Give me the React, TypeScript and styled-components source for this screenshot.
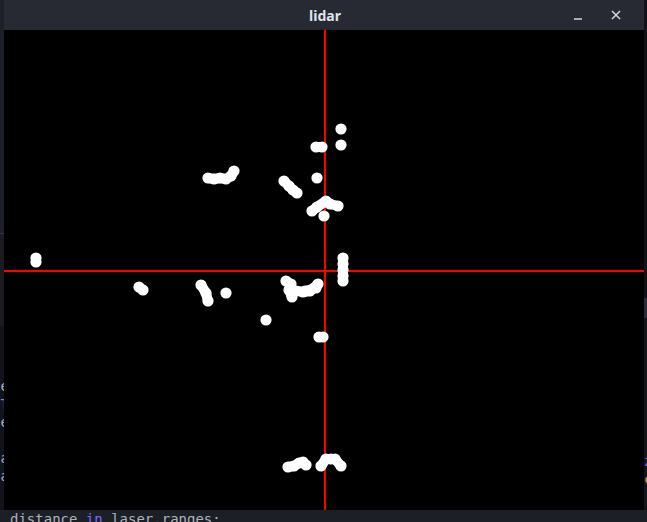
import React from "react";
import styled, { createGlobalStyle } from "styled-components";

const Global = createGlobalStyle`
  html, body { margin: 0; padding: 0; background: #15161b; overflow: hidden; }
  #root { width: 647px; height: 522px; }
`;

const Page = styled.div`
  width: 647px;
  height: 522px;
  display: flex;
  flex-direction: column;
  overflow: hidden;
  background: #15161b;
`;

const Middle = styled.div`
  display: flex;
  height: 510px;
`;

const Strip = styled.div<{ $w: number }>`
  width: ${(p) => p.$w}px;
  flex: none;
  display: flex;
  flex-direction: column;
  overflow: hidden;
`;

const StripBlock = styled.div<{ $h: number; $bg: string; $border?: string }>`
  height: ${(p) => p.$h}px;
  flex: none;
  width: 100%;
  background: ${(p) => p.$bg};
  border-bottom: ${(p) => (p.$border ? `1px solid ${p.$border}` : "none")};
`;

const StripText = styled.div<{ $align: "left" | "right"; $pad: number }>`
  flex: 1;
  width: 100%;
  display: flex;
  flex-direction: column;
  align-items: ${(p) => (p.$align === "right" ? "flex-start" : "flex-end")};
  padding-top: ${(p) => p.$pad}px;
  font-family: "DejaVu Sans Mono", monospace;
  font-size: 14px;
  line-height: 18px;
  color: #aab2bf;
  background: #13141a;
`;

const Glyph = styled.span<{ $c?: string; $dx: number }>`
  display: block;
  height: 18px;
  color: ${(p) => p.$c || "#aab2bf"};
  margin-right: ${(p) => p.$dx}px;
  white-space: pre;
`;

const Window = styled.div`
  width: 640px;
  flex: none;
  display: flex;
  flex-direction: column;
`;

const TitleBar = styled.div`
  height: 30px;
  background: #282a33;
  display: grid;
  grid-template-columns: 1fr auto 1fr;
  align-items: center;
`;

const Title = styled.div`
  font-family: "Noto Sans", "DejaVu Sans", sans-serif;
  font-weight: 700;
  font-size: 14px;
  color: #dfe3ea;
  grid-column: 2;
  transform: translateX(1px);
`;

const Controls = styled.div`
  grid-column: 3;
  justify-self: end;
  display: flex;
  align-items: center;
  gap: 22px;
  padding-right: 20px;
`;

const CtlBtn = styled.div`
  width: 16px;
  height: 16px;
  display: flex;
  align-items: center;
  justify-content: center;
`;

const Canvas = styled.div`
  height: 480px;
  background: #000;
`;

const EditorLine = styled.div`
  height: 12px;
  background: #1d1f26;
  display: flex;
  align-items: flex-start;
  padding-left: 10px;
  font-family: "DejaVu Sans Mono", monospace;
  font-size: 14px;
  line-height: 18px;
  color: #aab2bf;
  overflow: hidden;
  white-space: pre;
`;

const Kw = styled.span`
  color: #7a6af2;
`;

type Pt = [number, number];
const OX = 4;
const OY = 30;

const singles: Pt[] = [
  [341, 129], [341, 145], [317, 178], [226, 293], [266, 320], [324, 216],
];

const groups: Pt[][] = [
  [[316, 147], [322, 147]],
  [[208, 178], [214, 179], [220, 178], [226, 179], [231, 176], [234, 171]],
  [[284, 181], [289, 186], [293, 190], [297, 193]],
  [[312, 211], [317, 207], [326, 201], [330, 204], [338, 206]],
  [[36, 258], [36, 262]],
  [[343, 258], [343, 264], [343, 270], [343, 276], [343, 281]],
  [[139, 287], [143, 290]],
  [[201, 285], [206, 293], [208, 301]],
  [[319, 337], [323, 337]],
  [[286, 281], [291, 284], [289, 290], [292, 297]],
  [[292, 290], [303, 292], [310, 291], [318, 284]],
  [[305, 291], [316, 288]],
  [[288, 467], [294, 466], [299, 463], [303, 462], [306, 465]],
  [[321, 466], [326, 459], [331, 459], [335, 459], [341, 466]],
];

const Lidar: React.FC = () => (
  <svg width="640" height="480" viewBox="0 0 640 480" style={{ display: "block" }}>
    <line x1={0} y1={241} x2={640} y2={241} stroke="#ff0000" strokeWidth={2} />
    <line x1={321} y1={0} x2={321} y2={480} stroke="#ff0000" strokeWidth={2} />
    {groups.map((g, i) => (
      <g key={i}>
        <polyline
          points={g.map(([x, y]) => `${x - OX},${y - OY}`).join(" ")}
          fill="none"
          stroke="#fff"
          strokeWidth={10}
          strokeLinecap="round"
          strokeLinejoin="round"
        />
        {g.map(([x, y], j) => (
          <circle key={j} cx={x - OX} cy={y - OY} r={5.6} fill="#fff" />
        ))}
      </g>
    ))}
    {singles.map(([x, y], i) => (
      <circle key={i} cx={x - OX} cy={y - OY} r={5.6} fill="#fff" />
    ))}
  </svg>
);

export default function App() {
  return (
    <Page>
      <Global />
      <Middle>
        <Strip $w={4}>
          <StripBlock $h={233} $bg="#1e2027" $border="#33363f" />
          <StripBlock $h={92} $bg="#1b1c22" />
          <StripText $align="left" $pad={51}>
            <Glyph $dx={-5}>e</Glyph>
            <Glyph $dx={-5} $c="#6b8cd6">T</Glyph>
            <Glyph $dx={-5}>e</Glyph>
            <Glyph $dx={-5}> </Glyph>
            <Glyph $dx={-5}>a</Glyph>
            <Glyph $dx={-5}>a</Glyph>
          </StripText>
        </Strip>
        <Window>
          <TitleBar>
            <Title>lidar</Title>
            <Controls>
              <CtlBtn>
                <svg width="10" height="10" viewBox="0 0 10 10">
                  <line x1="1" y1="9" x2="9" y2="9" stroke="#d4d8e0" strokeWidth="1.5" />
                </svg>
              </CtlBtn>
              <CtlBtn>
                <svg width="10" height="10" viewBox="0 0 10 10">
                  <path d="M1 1 L9 9 M9 1 L1 9" stroke="#d4d8e0" strokeWidth="1.5" />
                </svg>
              </CtlBtn>
            </Controls>
          </TitleBar>
          <Canvas>
            <Lidar />
          </Canvas>
        </Window>
        <Strip $w={3}>
          <StripBlock $h={298} $bg="#121318" />
          <StripBlock $h={20} $bg="#2a2d36" />
          <StripText $align="right" $pad={44}>
            <Glyph $dx={0}> </Glyph>
            <Glyph $dx={0}> </Glyph>
            <Glyph $dx={0}> </Glyph>
            <Glyph $dx={0}> </Glyph>
            <Glyph $dx={0}> </Glyph>
            <Glyph $dx={0} $c="#7a6af2">z</Glyph>
            <Glyph $dx={0} $c="#d19a66">c</Glyph>
          </StripText>
        </Strip>
      </Middle>
      <EditorLine>
        <span>
          distance <Kw>in</Kw> laser.ranges:
        </span>
      </EditorLine>
    </Page>
  );
}
